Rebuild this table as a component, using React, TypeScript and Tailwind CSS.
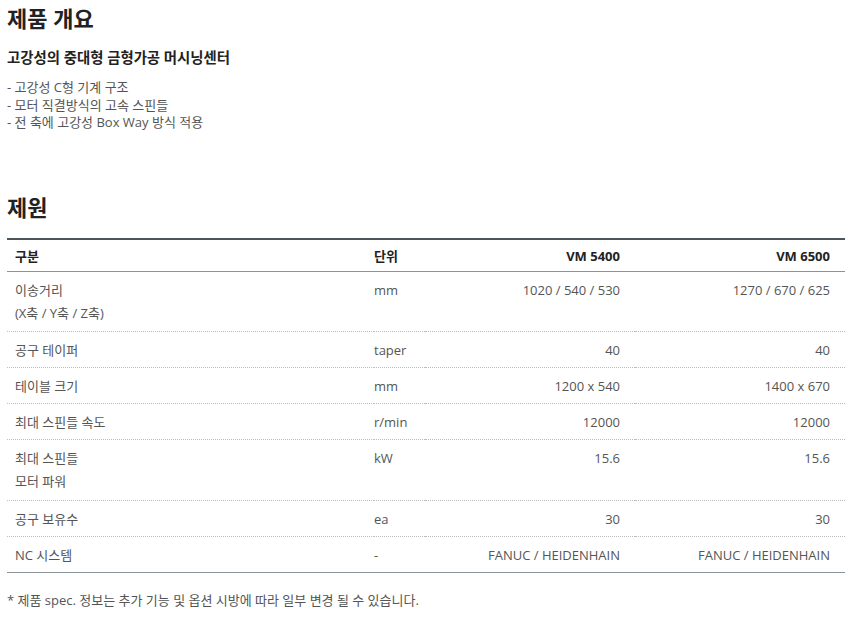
import React from 'react';

const specs = [
  { label: ['이송거리', '(X축 / Y축 / Z축)'], unit: 'mm', a: '1020 / 540 / 530', b: '1270 / 670 / 625' },
  { label: ['공구 테이퍼'], unit: 'taper', a: '40', b: '40' },
  { label: ['테이블 크기'], unit: 'mm', a: '1200 x 540', b: '1400 x 670' },
  { label: ['최대 스핀들 속도'], unit: 'r/min', a: '12000', b: '12000' },
  { label: ['최대 스핀들', '모터 파워'], unit: 'kW', a: '15.6', b: '15.6' },
  { label: ['공구 보유수'], unit: 'ea', a: '30', b: '30' },
  { label: ['NC 시스템'], unit: '-', a: 'FANUC / HEIDENHAIN', b: 'FANUC / HEIDENHAIN' },
];

export default function App() {
  return (
    <div className="min-h-[641px] w-[850px] bg-white px-[7px] font-['Open_Sans','Noto_Sans_CJK_KR',sans-serif] text-[#555]">
      {/* overview */}
      <h2 className="text-[22px] font-bold leading-[36px] text-[#222]">제품 개요</h2>
      <p className="mt-[12px] text-[14.4px] font-bold leading-[20px] text-[#222]">고강성의 중대형 금형가공 머시닝센터</p>
      <ul className="mt-[11px] text-[13px] leading-[17.5px] text-[#555]">
        <li>- 고강성 C형 기계 구조</li>
        <li>- 모터 직결방식의 고속 스핀들</li>
        <li>- 전 축에 고강성 Box Way 방식 적용</li>
      </ul>

      {/* specs */}
      <h2 className="mt-[57px] text-[22px] font-bold leading-[36px] text-[#222]">제원</h2>
      <table className="mt-[13px] w-[838px] table-fixed border-collapse border-t-2 border-b border-t-[#4b555c] border-b-[#8a9499] text-[13px]">
        <colgroup>
          <col className="w-[367px]" />
          <col className="w-[51px]" />
          <col className="w-[210px]" />
          <col className="w-[210px]" />
        </colgroup>
        <thead>
          <tr className="border-b border-[#8a9499] text-[#222]">
            <th className="pt-[5px] pb-[3px] pl-[8px] text-left font-bold leading-[23px]">구분</th>
            <th className="pt-[5px] pb-[3px] text-left font-bold leading-[23px]">단위</th>
            <th className="pt-[5px] pb-[3px] pr-[15px] text-right font-bold leading-[23px]">VM 5400</th>
            <th className="pt-[5px] pb-[3px] pr-[15px] text-right font-bold leading-[23px]">VM 6500</th>
          </tr>
        </thead>
        <tbody>
          {specs.map((s, i) => {
            const pad = s.label.length > 1 ? 'pt-[7px] pb-[6.5px]' : 'pt-[7px] pb-[5px]';
            return (
              <tr
                key={i}
                className={i < specs.length - 1 ? 'border-b border-dotted border-[#bbb]' : ''}
              >
                <td className={`${pad} pl-[8px] align-top leading-[23px]`}>
                  {s.label.map((l) => (
                    <div key={l}>{l}</div>
                  ))}
                </td>
                <td className={`${pad} align-top leading-[23px]`}>{s.unit}</td>
                <td className={`${pad} pr-[15px] text-right align-top leading-[23px]`}>{s.a}</td>
                <td className={`${pad} pr-[15px] text-right align-top leading-[23px]`}>{s.b}</td>
              </tr>
            );
          })}
        </tbody>
      </table>

      <p className="mt-[18px] text-[13px] leading-[18px] text-[#555]">
        * 제품 spec. 정보는 추가 기능 및 옵션 시방에 따라 일부 변경 될 수 있습니다.
      </p>
    </div>
  );
}
